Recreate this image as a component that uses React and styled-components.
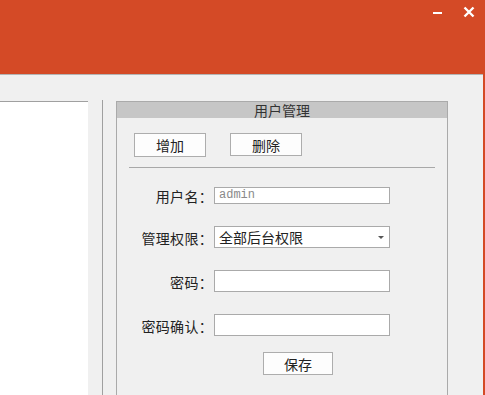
import React from "react";
import styled, { createGlobalStyle } from "styled-components";

const Global = createGlobalStyle`
  html, body { margin: 0; padding: 0; background: #f0f0f0; overflow: hidden; }
  body { font-family: "Noto Sans CJK SC", "Liberation Sans", sans-serif; }
  * { box-sizing: border-box; }
`;

const Window = styled.div`
  width: 485px;
  height: 395px;
  display: flex;
  flex-direction: column;
  background: #f0f0f0;
  border-right: 2px solid #d44a26;
  overflow: hidden;
`;

const TitleBar = styled.div`
  height: 75px;
  flex: none;
  background: #d44a26;
  border-bottom: 1px solid #b4b4b4;
  display: flex;
  justify-content: flex-end;
  align-items: flex-start;
  padding: 6px 8px 0 0;
  gap: 19px;
`;

const CtrlBtn = styled.div`
  width: 12px;
  height: 12px;
  display: flex;
  align-items: center;
  justify-content: center;
`;

const Content = styled.div`
  flex: 1;
  display: flex;
  padding-top: 26px;
  min-height: 0;
`;

const TreePanel = styled.div`
  width: 88px;
  background: #ffffff;
  border-top: 1px solid #a0a0a0;
`;

const Splitter = styled.div`
  width: 1px;
  margin: -1px 13px 0 14px;
  background: #a0a0a0;
`;

const GroupBox = styled.div`
  width: 332px;
  border: 1px solid #aaaaaa;
  border-bottom: none;
  display: flex;
  flex-direction: column;
`;

const GroupTitle = styled.div`
  height: 16px;
  background: #c6c6c6;
  text-align: center;
  font-size: 14px;
  line-height: 16px;
  color: #333;
`;

const ButtonRow = styled.div`
  display: flex;
  gap: 24px;
  padding: 15px 0 0 17px;
`;

const Btn = styled.button`
  width: ${(p) => p.$w || 72}px;
  height: ${(p) => p.$h || 24}px;
  border: 1px solid #adadad;
  background: #fdfdfd;
  font-family: "Noto Sans CJK SC", sans-serif;
  font-size: 14px;
  line-height: 20px;
  color: #222;
  padding: 0;
  border-radius: 0;
`;

const Divider = styled.div`
  height: 1px;
  background: #a8a8a8;
  margin: 10px 12px 0 12px;
`;

const Form = styled.div`
  display: grid;
  grid-template-columns: 96px 176px;
  column-gap: 1px;
  row-gap: 22px;
  padding-top: 18px;
  align-items: center;
`;

const Label = styled.div`
  justify-self: end;
  font-size: 14px;
  line-height: 16px;
  color: #222;
  white-space: nowrap;
  letter-spacing: 0.3px;
  margin-top: ${(p) => p.$dy || 0}px;
`;

const Input = styled.div`
  height: ${(p) => p.$h || 22}px;
  border: 1px solid #aaaaaa;
  background: #fff;
  display: flex;
  align-items: center;
  padding-left: 4px;
`;

const Placeholder = styled.span`
  font-family: "Liberation Mono", "DejaVu Sans Mono", monospace;
  font-size: 12px;
  color: #8a8a8a;
`;

const SelectBox = styled.div`
  height: 22px;
  border: 1px solid #aaaaaa;
  background: #fff;
  display: flex;
  align-items: center;
  justify-content: space-between;
  padding: 0 5px 0 4px;
  font-size: 14px;
  color: #222;
`;

const Caret = styled.span`
  width: 0;
  height: 0;
  border-left: 3px solid transparent;
  border-right: 3px solid transparent;
  border-top: 3px solid #555;
  margin-top: 1px;
`;

const SaveCell = styled.div`
  grid-column: 2;
  display: flex;
  padding-left: 49px;
  margin-top: -6px;
`;

export default function App() {
  return (
    <>
      <Global />
      <Window>
        <TitleBar>
          <CtrlBtn>
            <svg width="12" height="12" viewBox="0 0 12 12">
              <rect x="1" y="6" width="9" height="2" fill="#fff" />
            </svg>
          </CtrlBtn>
          <CtrlBtn>
            <svg width="12" height="12" viewBox="0 0 12 12">
              <path d="M1.5 1.5 L10.5 10.5 M10.5 1.5 L1.5 10.5" stroke="#fff" strokeWidth="2.4" />
            </svg>
          </CtrlBtn>
        </TitleBar>
        <Content>
          <TreePanel />
          <Splitter />
          <GroupBox>
            <GroupTitle>用户管理</GroupTitle>
            <ButtonRow>
              <Btn>增加</Btn>
              <Btn $h={23}>删除</Btn>
            </ButtonRow>
            <Divider />
            <Form>
              <Label $dy={2}>用户名：</Label>
              <Input $h={17}>
                <Placeholder>admin</Placeholder>
              </Input>
              <Label $dy={2}>管理权限：</Label>
              <SelectBox>
                全部后台权限
                <Caret />
              </SelectBox>
              <Label $dy={2}>密码：</Label>
              <Input />
              <Label $dy={2}>密码确认：</Label>
              <Input />
              <SaveCell>
                <Btn $w={70} $h={23}>保存</Btn>
              </SaveCell>
            </Form>
          </GroupBox>
        </Content>
      </Window>
    </>
  );
}
